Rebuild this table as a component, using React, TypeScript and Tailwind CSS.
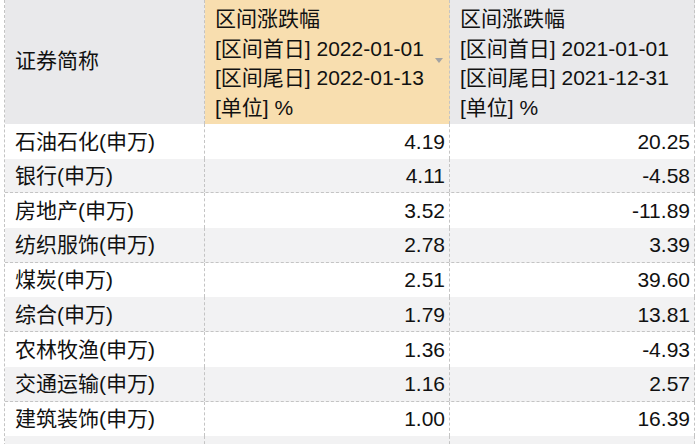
import React from "react";

interface Row {
  name: string;
  a: string;
  b: string;
}

const rows: Row[] = [
  { name: "石油石化(申万)", a: "4.19", b: "20.25" },
  { name: "银行(申万)", a: "4.11", b: "-4.58" },
  { name: "房地产(申万)", a: "3.52", b: "-11.89" },
  { name: "纺织服饰(申万)", a: "2.78", b: "3.39" },
  { name: "煤炭(申万)", a: "2.51", b: "39.60" },
  { name: "综合(申万)", a: "1.79", b: "13.81" },
  { name: "农林牧渔(申万)", a: "1.36", b: "-4.93" },
  { name: "交通运输(申万)", a: "1.16", b: "2.57" },
  { name: "建筑装饰(申万)", a: "1.00", b: "16.39" },
  { name: "", a: "", b: "" },
];

function HeaderCell({
  start,
  end,
  active,
}: {
  start: string;
  end: string;
  active?: boolean;
}) {
  return (
    <div
      className={
        "relative w-[245px] h-full border-r border-dashed border-[#c4c4c4] pl-[10px] pt-[4px] leading-[29.5px] " +
        (active ? "bg-[#f8deaf]" : "bg-[#e9e9eb]")
      }
    >
      <div>区间涨跌幅</div>
      <div>[区间首日] {start}</div>
      <div>[区间尾日] {end}</div>
      <div>[单位] %</div>
      {active && (
        <svg
          className="absolute left-[230px] top-[58px]"
          width="8"
          height="5"
          viewBox="0 0 8 5"
        >
          <path d="M0 0 L8 0 L4 5 Z" fill="#a3a3a3" />
        </svg>
      )}
    </div>
  );
}

export default function App() {
  return (
    <div
      className="w-[700px] h-[444px] overflow-hidden bg-white pl-[4px] text-[21px] text-[#111]"
      style={{ fontFamily: '"Liberation Sans", "Noto Sans CJK SC", sans-serif' }}
    >
      <div className="w-[691px] border-l border-dashed border-[#c4c4c4]">
        <div className="flex h-[124px]">
          <div className="w-[200px] h-full bg-[#e9e9eb] border-r border-dashed border-[#c4c4c4] pl-[10px] flex items-center pb-[2px]">
            证券简称
          </div>
          <HeaderCell start="2022-01-01" end="2022-01-13" active />
          <HeaderCell start="2021-01-01" end="2021-12-31" />
        </div>
        {rows.map((r, i) => (
          <div
            key={i}
            className={
              "flex h-[34.7px] items-center " +
              (i % 2 === 1
                ? "bg-[#f2f2f3] border-b border-dashed border-[#c4c4c4]"
                : "bg-white")
            }
          >
            <div className="w-[200px] h-full flex items-center pl-[10px] border-r border-dashed border-[#c4c4c4]">
              {r.name}
            </div>
            <div className="w-[245px] h-full flex items-center justify-end pr-[4px] border-r border-dashed border-[#c4c4c4]">
              {r.a}
            </div>
            <div className="w-[245px] h-full flex items-center justify-end pr-[4px] border-r border-dashed border-[#c4c4c4]">
              {r.b}
            </div>
          </div>
        ))}
      </div>
    </div>
  );
}
